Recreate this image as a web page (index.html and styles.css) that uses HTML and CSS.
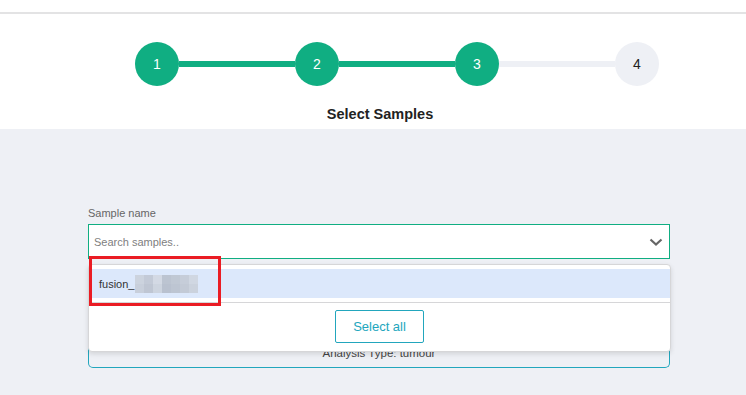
FILE: index.html
```html
<html>
<head>
    <title>Select Samples</title>
    <link rel="stylesheet" href="styles.css">
</head>
<body>
    <div class="topbar"></div>

    <div class="wizard">
        <div class="steps">
            <div class="step done">1</div>
            <div class="link done"></div>
            <div class="step done">2</div>
            <div class="link done"></div>
            <div class="step done">3</div>
            <div class="link"></div>
            <div class="step">4</div>
        </div>
        <h2 class="step-title">Select Samples</h2>
    </div>

    <div class="content">
        <div class="panel">
            <label class="field-label">Sample name</label>
            <div class="picker">
                <div class="search">
                    <span class="placeholder">Search samples..</span>
                    <svg class="chevron" width="14" height="8" viewBox="0 0 14 8">
                        <polyline points="1.5,1.5 7,6.5 12.5,1.5" fill="none" stroke="#666" stroke-width="2.2"/>
                    </svg>
                </div>

                <div class="dropdown">
                    <div class="option selected">
                        <span>fusion_</span>
                        <span class="mosaic">
                            <i style="background:#ccd3de"></i><i style="background:#c3cad7"></i><i style="background:#d3d9e4"></i><i style="background:#bcc4d1"></i><i style="background:#c0c8d4"></i><i style="background:#c6cdd9"></i><i style="background:#d0d7e2"></i>
                            <i style="background:#c8cfdb"></i><i style="background:#bfc6d3"></i><i style="background:#cdd4df"></i><i style="background:#b9c1cf"></i><i style="background:#bdc5d2"></i><i style="background:#c3cad6"></i><i style="background:#cbd2dd"></i>
                        </span>
                    </div>
                    <div class="dropdown-footer">
                        <button class="btn-outline">Select all</button>
                    </div>
                </div>

                <div class="highlight"></div>
            </div>

            <div class="summary">Analysis Type: tumour</div>
        </div>
    </div>
</body>
</html>
```

FILE: styles.css
```css
body {
    margin: 0;
    background: #eef0f5;
    font-family: "Liberation Sans", Arial, sans-serif;
    color: #333;
}

.topbar {
    height: 12px;
    background: #fff;
    border-bottom: 2px solid #e3e3e4;
}

.wizard {
    background: #fff;
    padding-top: 28px;
    height: 115px;
    box-sizing: border-box;
}

.steps {
    display: flex;
    align-items: center;
    padding-left: 135px;
}

.step {
    width: 44px;
    height: 44px;
    border-radius: 50%;
    background: #eef0f5;
    color: #222;
    display: flex;
    align-items: center;
    justify-content: center;
    font-size: 14px;
}

.step.done {
    background: #10ae82;
    color: #fff;
}

.link {
    width: 116px;
    height: 6px;
    background: #eef0f5;
}

.link.done {
    background: #10ae82;
}

.step-title {
    margin: 20px 0 0 14px;
    text-align: center;
    font-size: 14.5px;
    font-weight: bold;
    color: #222;
}

.content {
    height: 266px;
}

.panel {
    margin: 0 76px 0 88px;
    padding-top: 78px;
}

.field-label {
    display: block;
    font-size: 11px;
    color: #666;
    margin-bottom: 5px;
}

.picker {
    position: relative;
}

.search {
    height: 33px;
    background: #fff;
    border: 1px solid #10ae82;
    display: flex;
    align-items: center;
    justify-content: space-between;
    padding: 0 6px 0 5px;
}

.placeholder {
    font-size: 11px;
    color: #808080;
}

.dropdown {
    position: absolute;
    top: 40px;
    left: 0;
    right: -1px;
    background: #fff;
    border: 1px solid #d6d6d8;
    border-radius: 4px;
    box-shadow: 0 2px 5px rgba(0, 0, 0, 0.12);
    padding-top: 4px;
    z-index: 2;
}

.option {
    height: 29px;
    display: flex;
    align-items: center;
    padding-left: 10px;
    font-size: 11px;
    color: #333;
}

.option.selected {
    background: #dce8fb;
}

.mosaic {
    display: grid;
    grid-template-columns: repeat(7, 9px);
    grid-auto-rows: 9px;
    margin-left: 1px;
}

.mosaic i {
    display: block;
}

.dropdown-footer {
    margin-top: 4px;
    border-top: 1px solid #d6d6d8;
    display: flex;
    justify-content: center;
    padding: 7px 0 8px;
}

.btn-outline {
    width: 89px;
    height: 33px;
    background: #fff;
    border: 1px solid #22a6bd;
    border-radius: 2px;
    color: #22a6bd;
    font-family: "Liberation Sans", Arial, sans-serif;
    font-size: 13px;
}

.highlight {
    position: absolute;
    top: 32px;
    left: 1px;
    width: 126px;
    height: 44px;
    border: 3px solid #ea1c24;
    z-index: 3;
}

.summary {
    margin-top: 65px;
    height: 44px;
    border: 1px solid #22a6bd;
    border-top: none;
    border-radius: 0 0 5px 5px;
    display: flex;
    align-items: flex-end;
    justify-content: center;
    padding-bottom: 8px;
    box-sizing: border-box;
    font-size: 11.5px;
    color: #444;
}
```
